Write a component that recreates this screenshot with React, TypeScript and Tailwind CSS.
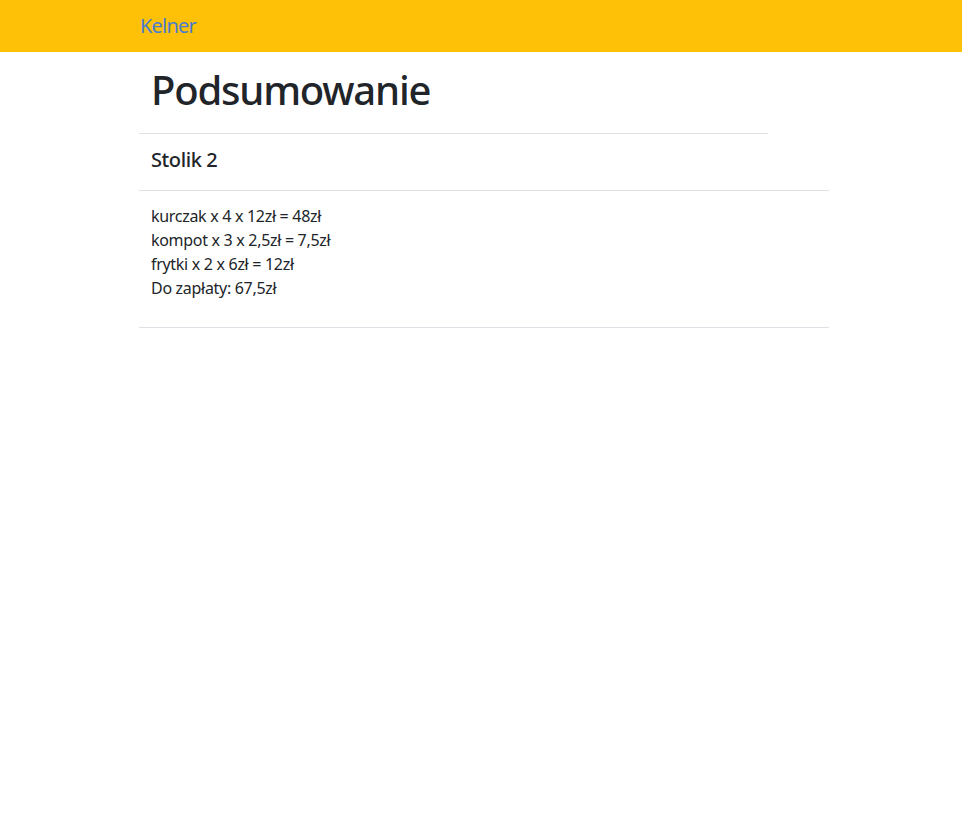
import React from "react";

const items = [
  "kurczak x 4 x 12zł = 48zł",
  "kompot x 3 x 2,5zł = 7,5zł",
  "frytki x 2 x 6zł = 12zł",
  "Do zapłaty: 67,5zł",
];

export default function App() {
  return (
    <div className="min-h-screen bg-white text-[#212529] font-['Noto_Sans',sans-serif]">
      {/* Navbar */}
      <nav className="h-[52px] w-[962px] bg-[#ffc107] flex items-center pl-[140px]">
        <span className="text-[20px] leading-none tracking-[-0.8px] text-[#4a7ccc]">Kelner</span>
      </nav>

      <div className="ml-[139px] w-[690px]">
        {/* Title */}
        <div className="w-[629px] border-b border-[#dee2e6] px-3 pt-[14px] pb-[19px]">
          <h1 className="text-[40px] leading-[48px] font-medium tracking-[-1.2px]">Podsumowanie</h1>
        </div>

        {/* Table header */}
        <div className="border-b border-[#dee2e6] px-3 h-[57px] flex items-center pb-[4px]">
          <h2 className="text-[20px] font-medium tracking-[-0.4px]">Stolik 2</h2>
        </div>

        {/* Order */}
        <div className="border-b border-[#dee2e6] px-3 pt-[13px] h-[137px]">
          {items.map((line) => (
            <p key={line} className="text-[16px] leading-[24px] tracking-[-0.3px]">
              {line}
            </p>
          ))}
        </div>
      </div>
    </div>
  );
}
